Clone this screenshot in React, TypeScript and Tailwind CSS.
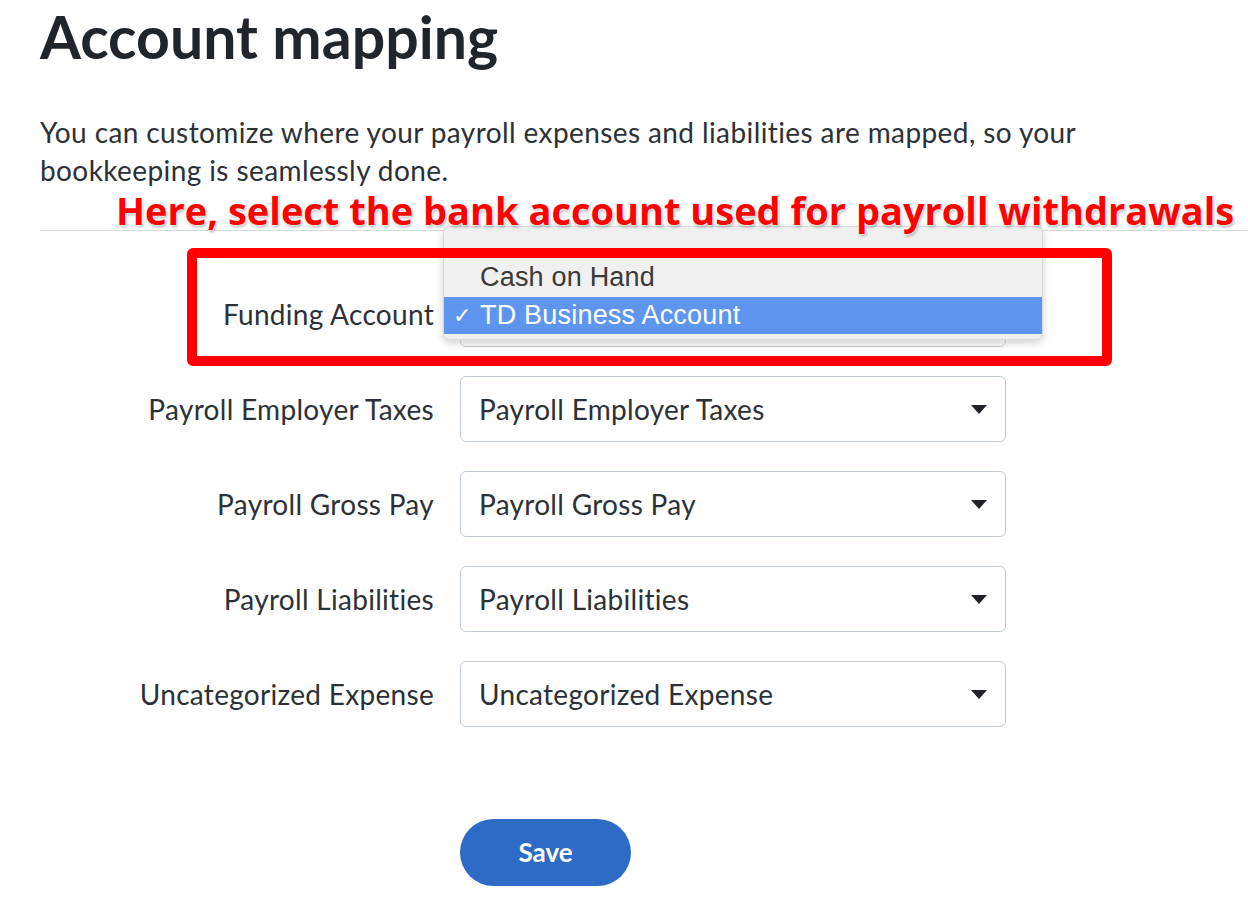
import React from 'react'

// Account mapping form, with the native select popup opened and a red callout on top
const ROWS = [
    { label: 'Funding Account', value: 'TD Business Account' },
    { label: 'Payroll Employer Taxes', value: 'Payroll Employer Taxes' },
    { label: 'Payroll Gross Pay', value: 'Payroll Gross Pay' },
    { label: 'Payroll Liabilities', value: 'Payroll Liabilities' },
    { label: 'Uncategorized Expense', value: 'Uncategorized Expense' },
]

function Caret() {
    return (
        <svg width="16" height="9" viewBox="0 0 16 9" className="shrink-0">
            <path d="M0 0 H16 L8 9 Z" fill="#1f2328" />
        </svg>
    )
}

function SelectRow({ label, value }: { label: string; value: string }) {
    return (
        <div className="flex items-center h-[66px]">
            <div className="w-[434px] text-right text-[28px] text-[#2b3137] tracking-[0.3px]">{label}</div>
            <div className="ml-[26px] w-[546px] h-[66px] flex items-center justify-between pl-[18px] pr-[18px] border border-[#c3ccd5] rounded-[6px] bg-white text-[28px] text-[#2b3137] tracking-[0.3px]">
                <span>{value}</span>
                <Caret />
            </div>
        </div>
    )
}

export default function App() {
    return (
        <div className="relative w-[1248px] h-[916px] overflow-hidden bg-white font-['Lato',sans-serif]">
            <div className="pl-10">
                <h1 className="pt-[2px] text-[59px] leading-[70px] font-bold text-[#1f252a]">Account mapping</h1>
                <p className="mt-[41px] w-[1100px] text-[28px] leading-[38px] text-[#2b3137] tracking-[0.4px]">
                    You can customize where your payroll expenses and liabilities are mapped, so your bookkeeping is seamlessly done.
                </p>
            </div>
            <div className="ml-10 mt-[41px] h-px bg-[#d3dae0]" />

            <div className="mt-[50px] flex flex-col gap-[29px]">
                {ROWS.map(r => (
                    <SelectRow key={r.label} label={r.label} value={r.value} />
                ))}
            </div>

            <div className="mt-[92px] pl-[460px]">
                <button className="w-[171px] h-[67px] rounded-full bg-[#2d6bc7] text-white text-[26px] font-bold">
                    Save
                </button>
            </div>

            {/* native select popup */}
            <div className="absolute left-[443px] top-[226px] w-[600px] h-[114px] bg-[#f0f0f0] rounded-[6px] border border-[#d8d8d8] shadow-[0_3px_8px_rgba(0,0,0,0.18)] font-['Liberation_Sans',sans-serif] text-[27px] tracking-[0.2px] pt-[30px]">
                <div className="h-[40px] flex items-center pl-[36px] text-[#3a3a3a]">Cash on Hand</div>
                <div className="h-[37px] flex items-center bg-[#5e96ef] text-white">
                    <span className="w-[36px] text-center text-[22px]">✓</span>
                    <span>TD Business Account</span>
                </div>
            </div>

            {/* callout */}
            <div className="absolute left-[187px] top-[248px] w-[925px] h-[118px] border-[10px] border-[#ff0000] rounded-[6px]" />
            <div className="absolute left-[116px] top-[184px] whitespace-nowrap font-['Open_Sans',sans-serif] font-bold text-[38px] leading-[52px] text-[#ff0000] [text-shadow:0_0_2px_#fff,0_0_2px_#fff,0_0_3px_#fff,1px_2px_3px_rgba(0,0,0,0.35)]">
                Here, select the bank account used for payroll withdrawals
            </div>
        </div>
    )
}
